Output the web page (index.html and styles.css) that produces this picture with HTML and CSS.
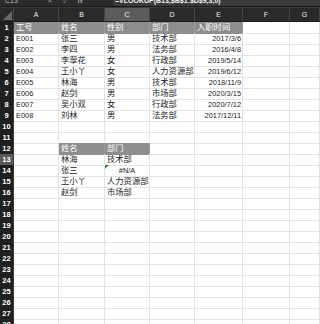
FILE: index.html
```
<!DOCTYPE html>
<html lang="zh">
<head>
<meta charset="utf-8">
<link rel="stylesheet" href="styles.css">
</head>
<body>
<div class="fbar">
  <div class="namebox">C13</div>
  <div class="fx-icons">✕ ✓ <span class="fx">fx</span></div>
  <div class="formula">=VLOOKUP(B13,$B$1:$D$9,3,0)</div>
</div>
<div class="sheet">
  <div class="row colhead"><span class="corner"></span><span>A</span><span>B</span><span class="sel">C</span><span>D</span><span>E</span><span>F</span><span>G</span></div>
  <div class="row"><span class="rh">1</span><span class="hd">工号</span><span class="hd">姓名</span><span class="hd">性别</span><span class="hd">部门</span><span class="hd">入职时间</span><span></span><span></span></div>
  <div class="row"><span class="rh">2</span><span class="n">E001</span><span>张三</span><span>男</span><span>技术部</span><span class="n r">2017/3/6</span><span></span><span></span></div>
  <div class="row"><span class="rh">3</span><span class="n">E002</span><span>李四</span><span>男</span><span>法务部</span><span class="n r">2016/4/8</span><span></span><span></span></div>
  <div class="row"><span class="rh">4</span><span class="n">E003</span><span>李翠花</span><span>女</span><span>行政部</span><span class="n r">2019/5/14</span><span></span><span></span></div>
  <div class="row"><span class="rh">5</span><span class="n">E004</span><span>王小丫</span><span>女</span><span>人力资源部</span><span class="n r">2019/6/12</span><span></span><span></span></div>
  <div class="row"><span class="rh">6</span><span class="n">E005</span><span>林海</span><span>男</span><span>技术部</span><span class="n r">2018/11/9</span><span></span><span></span></div>
  <div class="row"><span class="rh">7</span><span class="n">E006</span><span>赵剑</span><span>男</span><span>市场部</span><span class="n r">2020/3/15</span><span></span><span></span></div>
  <div class="row"><span class="rh">8</span><span class="n">E007</span><span>吴小双</span><span>女</span><span>行政部</span><span class="n r">2020/7/12</span><span></span><span></span></div>
  <div class="row"><span class="rh">9</span><span class="n">E008</span><span>刘林</span><span>男</span><span>法务部</span><span class="n r">2017/12/11</span><span></span><span></span></div>
  <div class="row"><span class="rh">10</span><span></span><span></span><span></span><span></span><span></span><span></span><span></span></div>
  <div class="row"><span class="rh">11</span><span></span><span></span><span></span><span></span><span></span><span></span><span></span></div>
  <div class="row"><span class="rh">12</span><span></span><span class="hd">姓名</span><span class="hd">部门</span><span></span><span></span><span></span><span></span></div>
  <div class="row"><span class="rh selrow">13</span><span></span><span>林海</span><span>技术部</span><span></span><span></span><span></span><span></span></div>
  <div class="row"><span class="rh">14</span><span></span><span>张三</span><span class="n err">#N/A</span><span></span><span></span><span></span><span></span></div>
  <div class="row"><span class="rh">15</span><span></span><span>王小丫</span><span>人力资源部</span><span></span><span></span><span></span><span></span></div>
  <div class="row"><span class="rh">16</span><span></span><span>赵剑</span><span>市场部</span><span></span><span></span><span></span><span></span></div>
  <div class="row"><span class="rh">17</span><span></span><span></span><span></span><span></span><span></span><span></span><span></span></div>
  <div class="row"><span class="rh">18</span><span></span><span></span><span></span><span></span><span></span><span></span><span></span></div>
  <div class="row"><span class="rh">19</span><span></span><span></span><span></span><span></span><span></span><span></span><span></span></div>
  <div class="row"><span class="rh">20</span><span></span><span></span><span></span><span></span><span></span><span></span><span></span></div>
  <div class="row"><span class="rh">21</span><span></span><span></span><span></span><span></span><span></span><span></span><span></span></div>
  <div class="row"><span class="rh">22</span><span></span><span></span><span></span><span></span><span></span><span></span><span></span></div>
  <div class="row"><span class="rh">23</span><span></span><span></span><span></span><span></span><span></span><span></span><span></span></div>
  <div class="row"><span class="rh">24</span><span></span><span></span><span></span><span></span><span></span><span></span><span></span></div>
  <div class="row"><span class="rh">25</span><span></span><span></span><span></span><span></span><span></span><span></span><span></span></div>
  <div class="row"><span class="rh">26</span><span></span><span></span><span></span><span></span><span></span><span></span><span></span></div>
  <div class="row"><span class="rh">27</span><span></span><span></span><span></span><span></span><span></span><span></span><span></span></div>
  <div class="row"><span class="rh">28</span><span></span><span></span><span></span><span></span><span></span><span></span><span></span></div>
</div>
</body>
</html>
```
FILE: styles.css
```
html, body {
  margin: 0;
  padding: 0;
  background: #ffffff;
  overflow: hidden;
}
body {
  width: 320px;
  height: 324px;
  font-family: "Liberation Sans", "Noto Sans CJK SC", sans-serif;
}
.fbar {
  height: 6px;
  border-bottom: 1px solid #1a1a1a;
  background: #2b2b2b;
  display: flex;
  align-items: flex-end;
  overflow: hidden;
  color: #d8d8d8;
  font-size: 7px;
  line-height: 10px;
}
.namebox {
  width: 36px;
  padding-left: 5px;
  flex: none;
  color: #bbbbbb;
}
.fx-icons {
  width: 66px;
  flex: none;
  color: #8a8a8a;
  padding-left: 6px;
  word-spacing: 8px;
}
.fx {
  font-style: italic;
  color: #cfcfcf;
}
.formula {
  flex: 1;
  background: #3a3a3a;
  color: #f2f2f2;
  font-weight: bold;
  padding-left: 2px;
  white-space: nowrap;
}
.sheet {
  display: flex;
  flex-direction: column;
}
.row {
  display: grid;
  grid-template-columns: 14px 45px 46px 45px 45px 48px 47px 1fr;
  height: 11px;
  font-size: 8.3px;
  line-height: 11px;
  color: #222222;
}
.row > span {
  box-sizing: border-box;
  border-right: 1px solid #e2e2e2;
  border-bottom: 1px solid #e2e2e2;
  padding: 0 2px;
  white-space: nowrap;
  position: relative;
}
.row.colhead {
  height: 15px;
  line-height: 15px;
  font-size: 7px;
  color: #f0f0f0;
  background: #2a2a2a;
}
.row.colhead > span {
  text-align: center;
  border-right: 1px solid #444444;
  border-bottom: 1px solid #1c1c1c;
  border-top: 1px solid #3a3a3a;
  line-height: 13px;
}
.row.colhead > span.sel {
  background: #5c5c5c;
}
.row.colhead > span.corner {
  background: #2a2a2a;
}
.corner::after {
  content: "";
  position: absolute;
  right: 1px;
  bottom: 1px;
  border-style: solid;
  border-width: 0 0 9px 9px;
  border-color: transparent transparent #6a6a6a transparent;
}
.row > span.rh {
  background: #202020;
  color: #ffffff;
  font-weight: bold;
  font-size: 7.5px;
  text-align: center;
  padding: 0;
  border-right: 1px solid #3a3a3a;
  border-bottom: 1px solid #3c3c3c;
}
.row > span.rh.selrow {
  background: #5a5a5a;
}
.row > span.hd {
  background: #8d8d8d;
  color: #ffffff;
  border-right-color: #999999;
  border-bottom-color: #8d8d8d;
}
.row > span.n {
  font-size: 7.4px;
}
.row > span.r {
  text-align: right;
  padding-right: 1px;
}
.row > span.err {
  text-align: center;
}
.err::before {
  content: "";
  position: absolute;
  left: 0;
  top: 0;
  border-style: solid;
  border-width: 4px 4px 0 0;
  border-color: #2e8b3e transparent transparent transparent;
}
```
